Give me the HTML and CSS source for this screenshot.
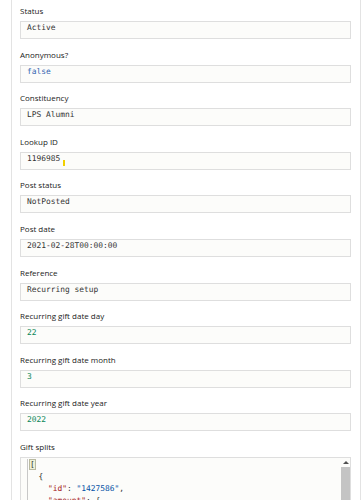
FILE: index.html
```html
<!DOCTYPE html>
<html>
<head>
<meta charset="utf-8">
<link rel="stylesheet" href="styles.css">
</head>
<body>
<div class="card">
  <div class="field">
    <div class="label">Status</div>
    <div class="box"><span class="txt">Active</span></div>
  </div>
  <div class="field">
    <div class="label">Anonymous?</div>
    <div class="box"><span class="kw">false</span></div>
  </div>
  <div class="field">
    <div class="label">Constituency</div>
    <div class="box"><span class="txt">LPS Alumni</span></div>
  </div>
  <div class="field">
    <div class="label">Lookup ID</div>
    <div class="box"><span class="txt">1196985</span><span class="caret"></span></div>
  </div>
  <div class="field">
    <div class="label">Post status</div>
    <div class="box"><span class="txt">NotPosted</span></div>
  </div>
  <div class="field">
    <div class="label">Post date</div>
    <div class="box"><span class="txt">2021-02-28T00:00:00</span></div>
  </div>
  <div class="field">
    <div class="label">Reference</div>
    <div class="box"><span class="txt">Recurring setup</span></div>
  </div>
  <div class="field">
    <div class="label">Recurring gift date day</div>
    <div class="box"><span class="num">22</span></div>
  </div>
  <div class="field">
    <div class="label">Recurring gift date month</div>
    <div class="box"><span class="num">3</span></div>
  </div>
  <div class="field">
    <div class="label">Recurring gift date year</div>
    <div class="box"><span class="num">2022</span></div>
  </div>
  <div class="field">
    <div class="label">Gift splits</div>
    <div class="editor">
      <div class="code">
        <div class="ln"><span class="brk">[</span></div>
        <div class="ln guide">  {</div>
        <div class="ln guide">    <span class="key">"id"</span>: <span class="val">"1427586"</span>,</div>
        <div class="ln guide">    <span class="key">"amount"</span>: {</div>
        <div class="ln guide">      <span class="key">"value"</span>: <span class="num">25</span></div>
        <div class="ln guide">    },</div>
      </div>
      <div class="scrollbar">
        <div class="arrow"></div>
        <div class="thumb"></div>
      </div>
    </div>
  </div>
</div>
</body>
</html>
```

FILE: styles.css
```css
html, body {
  margin: 0;
  padding: 0;
  background: #ffffff;
  overflow: hidden;
  height: 500px;
}

.card {
  margin-left: 11px;
  width: 331px;
  border-left: 1px solid #e3e3e3;
  border-right: 1px solid #e3e3e3;
  padding: 5px 9px 0 8px;
  background: #ffffff;
}

.field {
  margin-bottom: 9.6px;
}

.label {
  font-family: "Open Sans", "Noto Sans", sans-serif;
  font-size: 8px;
  line-height: 12px;
  color: #222222;
  margin-bottom: 4px;
}

.box {
  box-sizing: border-box;
  height: 18px;
  border: 1px solid #dedede;
  background: #fcfcfa;
  padding: 0 0 0 6px;
  font-family: "DejaVu Sans Mono", "Liberation Mono", monospace;
  font-size: 7.9px;
  line-height: 11px;
  white-space: pre;
  display: flex;
  align-items: flex-start;
}

.txt { color: #333333; }
.kw { color: #2f62b0; }
.num { color: #098658; }

.caret {
  display: inline-block;
  width: 2px;
  height: 6px;
  background: #f2d000;
  margin-left: 3px;
  margin-top: 7px;
}

.editor {
  box-sizing: border-box;
  height: 200px;
  border: 1px solid #dedede;
  background: #fcfcfa;
  display: flex;
  overflow: hidden;
}

.code {
  flex: 1;
  padding-left: 6px;
  padding-top: 1px;
  font-family: "DejaVu Sans Mono", "Liberation Mono", monospace;
  font-size: 7.9px;
  line-height: 12px;
  color: #333333;
}

.ln {
  height: 12px;
  border-left: 1px solid #c8c8c8;
  padding-left: 1px;
  white-space: pre;
}

.brk {
  display: inline-block;
  box-sizing: border-box;
  height: 11px;
  line-height: 10px;
  border: 1px solid #b9b9a0;
  background: #eef2d8;
}

.key { color: #a31515; }
.val { color: #0451a5; }

.scrollbar {
  width: 9px;
  display: flex;
  flex-direction: column;
  align-items: center;
  padding-top: 3px;
}

.arrow {
  width: 0;
  height: 0;
  border-left: 3px solid transparent;
  border-right: 3px solid transparent;
  border-bottom: 3px solid #505050;
  margin-bottom: 3px;
}

.thumb {
  width: 9px;
  flex: 1;
  background: #c4c4c4;
}
```
